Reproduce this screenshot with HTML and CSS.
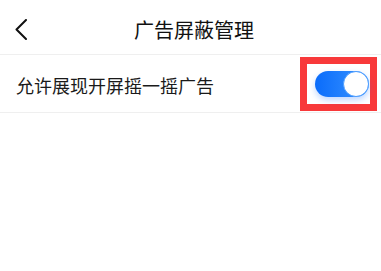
FILE: index.html
```html
<!DOCTYPE html>
<html lang="zh-CN">
<head>
<meta charset="utf-8">
<title>广告屏蔽管理</title>
<link rel="stylesheet" href="styles.css">
</head>
<body>
<div class="page">
  <header class="header">
    <svg class="back" width="12" height="21" viewBox="0 0 12 21">
      <polyline points="11,1 1.5,10.5 11,20" fill="none" stroke="#111" stroke-width="2" stroke-linecap="round" stroke-linejoin="round"/>
    </svg>
    <h1 class="title">广告屏蔽管理</h1>
  </header>
  <div class="row">
    <span class="label">允许展现开屏摇一摇广告</span>
    <div class="highlight">
      <div class="switch">
        <span class="knob"></span>
      </div>
    </div>
  </div>
</div>
</body>
</html>
```
FILE: styles.css
```css
html, body {
  margin: 0;
  padding: 0;
  background: #fff;
}
.page {
  width: 381px;
  height: 271px;
  font-family: "Noto Sans CJK SC", "Noto Sans", sans-serif;
  color: #1a1a1a;
}
.header {
  height: 54px;
  display: flex;
  align-items: center;
  padding-left: 15px;
  border-bottom: 1px solid #efefef;
  box-sizing: content-box;
}
.back {
  display: block;
  margin-top: 5px;
}
.title {
  margin: 5px 0 0 107px;
  font-size: 20px;
  line-height: 24px;
  font-weight: 400;
  color: #111;
}
.row {
  height: 57px;
  display: flex;
  align-items: center;
  justify-content: space-between;
  padding-left: 16px;
  padding-right: 4px;
  border-bottom: 1px solid #efefef;
}
.label {
  font-size: 18px;
  line-height: 22px;
  margin-top: 2px;
}
.highlight {
  border: 7px solid #f8393a;
  padding: 7px 1px 7px 8px;
  background: #fff;
}
.switch {
  width: 54px;
  height: 26px;
  border-radius: 13px;
  background: linear-gradient(90deg, #0a6cfb, #3b95ff);
  box-shadow: 0 3px 6px rgba(40, 120, 255, 0.3);
  display: flex;
  justify-content: flex-end;
}
.knob {
  width: 26px;
  height: 26px;
  box-sizing: border-box;
  border-radius: 50%;
  background: #fff;
  border: 1.5px solid #4c9dff;
}
```
